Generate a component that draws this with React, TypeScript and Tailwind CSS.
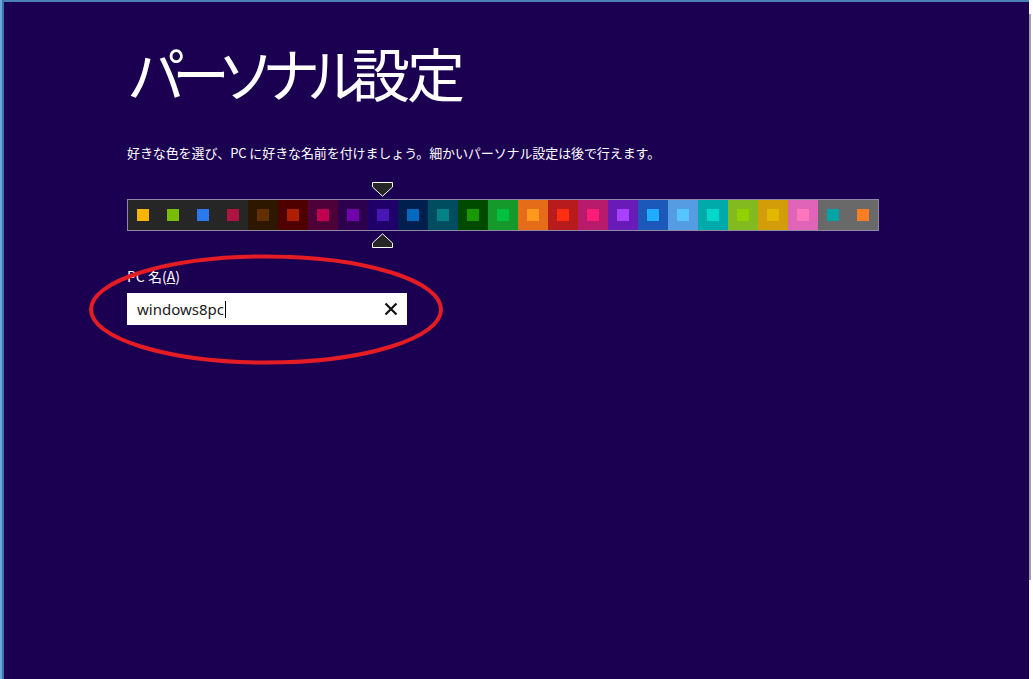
import React from "react";

const cells: { bg: string; sq: string }[] = [
  { bg: "#262626", sq: "#f7b500" },
  { bg: "#262626", sq: "#78bd00" },
  { bg: "#262626", sq: "#2a7aee" },
  { bg: "#262626", sq: "#ad1441" },
  { bg: "#2d1700", sq: "#632f00" },
  { bg: "#4e0000", sq: "#b01e00" },
  { bg: "#4e0038", sq: "#c1004f" },
  { bg: "#2d004e", sq: "#7200ac" },
  { bg: "#1f0068", sq: "#4617b4" },
  { bg: "#001e4e", sq: "#006ac1" },
  { bg: "#004d60", sq: "#008287" },
  { bg: "#004a00", sq: "#199900" },
  { bg: "#15992a", sq: "#00c13f" },
  { bg: "#e56c19", sq: "#ff981d" },
  { bg: "#b81b1b", sq: "#ff2e12" },
  { bg: "#b81b6c", sq: "#ff1d77" },
  { bg: "#691bb8", sq: "#aa40ff" },
  { bg: "#1b58b8", sq: "#1faeff" },
  { bg: "#569ce3", sq: "#56c5ff" },
  { bg: "#00aaaa", sq: "#00d8cc" },
  { bg: "#83ba1f", sq: "#91d100" },
  { bg: "#d39d09", sq: "#e1b700" },
  { bg: "#e064b7", sq: "#ff76bc" },
  { bg: "#696969", sq: "#00a4a4" },
  { bg: "#696969", sq: "#ff7d23" },
];

function Arrow({ up }: { up?: boolean }) {
  return (
    <svg width="21" height="15" viewBox="0 0 21 15" className={up ? "rotate-180" : ""}>
      <polygon
        points="0.5,0.5 20.5,0.5 20.5,5 10.5,14.2 0.5,5"
        fill="#262626"
        stroke="#ffffff"
        strokeWidth="1"
      />
    </svg>
  );
}

export default function App() {
  const jp = { fontFamily: '"Noto Sans CJK JP", "Noto Sans", sans-serif' };
  return (
    <div className="w-[1033px] h-[679px] flex overflow-hidden bg-[#1b0052]">
      <div className="w-[2px] h-full bg-[#6ea6d8]" />
      <div className="w-[2px] h-full bg-[#3a74b0]" />
      <div className="flex-1 flex flex-col">
        <div className="h-[2px] w-full bg-[#4a7fb8]" />
        <div className="flex-1 pl-[123px] relative" style={jp}>
          <h1 className="mt-[36px] text-[58px] leading-[68px] font-normal text-white">
            <span className="tracking-[-13px]">パーソナル</span>
            <span className="tracking-[-3px]">設定</span>
          </h1>
          <p className="mt-[37px] text-[13px] leading-[20px] text-white tracking-[-0.1px]">
            好きな色を選び、PC に好きな名前を付けましょう。細かいパーソナル設定は後で行えます。
          </p>
          <div className="relative mt-[36px] w-[752px]">
            <div className="flex border border-[#8f87a8]">
              {cells.map((c, i) => (
                <div
                  key={i}
                  className="w-[30px] h-[30px] flex items-center justify-center"
                  style={{ background: c.bg }}
                >
                  <div className="w-[12px] h-[12px]" style={{ background: c.sq }} />
                </div>
              ))}
            </div>
            <div className="absolute left-[245px] top-[-17px] flex">
              <Arrow />
            </div>
            <div className="absolute left-[245px] top-[34px] flex">
              <Arrow up />
            </div>
          </div>
          <div className="mt-[35px] text-[14px] leading-[20px] text-white">
            PC 名(<span className="underline">A</span>)
          </div>
          <div className="mt-[7px] w-[280px] h-[32px] bg-white flex items-center pl-[10px] pr-[9px]">
            <span
              className="text-[15px] text-[#1a1a1a] leading-[20px]"
              style={{ fontFamily: '"Noto Sans", sans-serif' }}
            >
              windows8pc
            </span>
            <span className="w-[1px] h-[17px] bg-black ml-[1px]" />
            <span className="flex-1" />
            <svg width="14" height="14" viewBox="0 0 14 14">
              <path d="M1.5 1.5 L12.5 12.5 M12.5 1.5 L1.5 12.5" stroke="#111" strokeWidth="2.2" />
            </svg>
          </div>
          <svg
            className="absolute left-[81px] top-[251px] pointer-events-none"
            width="362"
            height="118"
            viewBox="0 0 362 118"
          >
            <ellipse cx="181" cy="56.5" rx="175" ry="53" fill="none" stroke="#e51c24" strokeWidth="4" />
          </svg>
        </div>
      </div>
      <div className="w-[4px] h-full bg-white flex">
        <div className="w-[2px] mt-[14px] h-[566px] bg-[#a0a0a0]" />
      </div>
    </div>
  );
}
